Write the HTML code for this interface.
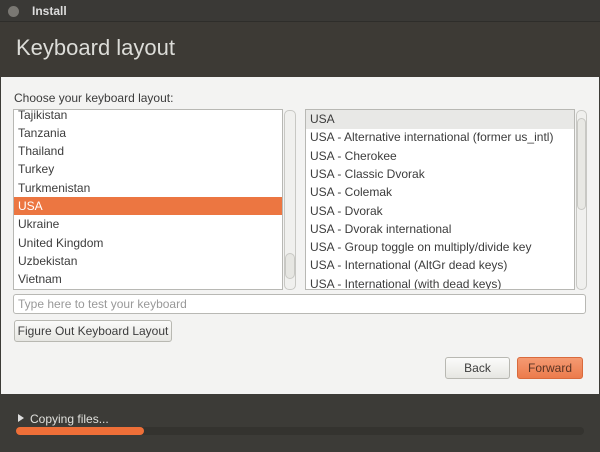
<html><head><style>
body{margin:0;width:600px;height:452px;overflow:hidden;font-family:"Liberation Sans",sans-serif;background:#3c3b37;position:relative}
div{position:absolute;box-sizing:border-box}
.t{font-size:12px;color:#3c3c3c;white-space:nowrap}
.row{position:absolute;left:0;right:0;height:18.3px;line-height:18px;padding-left:4px;font-size:12px;color:#3c3c3c}
.sb{background:#f0f0ee;border:1px solid #c8c8c4;border-radius:5px}
.btn{border:1px solid #b8b8b2;border-radius:3px;background:linear-gradient(#fbfbfa,#e6e6e2);font-size:12px;color:#3c3c3c;text-align:center}
</style></head><body>
<div style="left:0;top:0;width:600px;height:22px;background:#3a3936;border-bottom:1px solid #2e2d2a"></div>
<div style="left:8px;top:6px;width:11px;height:11px;border-radius:50%;background:#7a7873"></div>
<div style="left:32px;top:4px;font-size:12px;font-weight:bold;color:#ddd">Install</div>
<div style="left:0;top:22px;width:600px;height:55px;background:#3d3a35"></div>
<div style="left:16px;top:35px;font-size:22px;color:#dcdcd8">Keyboard layout</div>
<div style="left:1px;top:77px;width:598px;height:317px;background:#f3f3f2"></div>
<div class="t" style="left:14px;top:91px">Choose your keyboard layout:</div>
<div style="left:13px;top:109px;width:270px;height:181px;background:#fff;border:1px solid #b8b8b4;overflow:hidden">
<div class="row" style="top:-4.5px">Tajikistan</div><div class="row" style="top:13.8px">Tanzania</div><div class="row" style="top:32.1px">Thailand</div><div class="row" style="top:50.4px">Turkey</div><div class="row" style="top:68.7px">Turkmenistan</div>
<div class="row" style="top:87px;background:#ec7641;color:#fff">USA</div>
<div class="row" style="top:105.3px">Ukraine</div><div class="row" style="top:123.6px">United Kingdom</div><div class="row" style="top:141.9px">Uzbekistan</div><div class="row" style="top:160.2px">Vietnam</div></div>
<div class="sb" style="left:284px;top:110px;width:12px;height:180px"></div>
<div class="sb" style="left:285px;top:253px;width:10px;height:26px;background:#e6e6e2"></div>
<div style="left:305px;top:109px;width:270px;height:181px;background:#fff;border:1px solid #b8b8b4;overflow:hidden">
<div class="row" style="top:0;background:#e8e8e6;height:19px">USA</div><div class="row" style="top:18.3px">USA - Alternative international (former us_intl)</div><div class="row" style="top:36.6px">USA - Cherokee</div><div class="row" style="top:54.9px">USA - Classic Dvorak</div><div class="row" style="top:73.2px">USA - Colemak</div><div class="row" style="top:91.5px">USA - Dvorak</div><div class="row" style="top:109.8px">USA - Dvorak international</div><div class="row" style="top:128.1px">USA - Group toggle on multiply/divide key</div><div class="row" style="top:146.4px">USA - International (AltGr dead keys)</div><div class="row" style="top:164.7px">USA - International (with dead keys)</div></div>
<div class="sb" style="left:576px;top:110px;width:11px;height:180px"></div>
<div class="sb" style="left:577px;top:118px;width:9px;height:92px;background:#e8e8e4"></div>
<div style="left:13px;top:294px;width:573px;height:20px;background:#fff;border:1px solid #b8b8b4;border-radius:3px"></div>
<div class="t" style="left:18px;top:297px;color:#999">Type here to test your keyboard</div>
<div class="btn" style="left:14px;top:320px;width:158px;height:22px;line-height:20px">Figure Out Keyboard Layout</div>
<div class="btn" style="left:445px;top:357px;width:65px;height:22px;line-height:20px">Back</div>
<div class="btn" style="left:517px;top:357px;width:66px;height:22px;line-height:20px;background:linear-gradient(#f49a72,#ec7b4c);border-color:#d96a3c;color:#5a3424">Forward</div>
<div style="left:18px;top:414px;width:0;height:0;border-left:6px solid #ddd;border-top:4px solid transparent;border-bottom:4px solid transparent"></div>
<div style="left:30px;top:412px;font-size:12px;color:#e0e0dc">Copying files...</div>
<div style="left:16px;top:427px;width:568px;height:8px;background:#34332f;border-radius:4px"></div>
<div style="left:16px;top:427px;width:128px;height:8px;background:#ee6f38;border-radius:4px"></div>
</body></html>
